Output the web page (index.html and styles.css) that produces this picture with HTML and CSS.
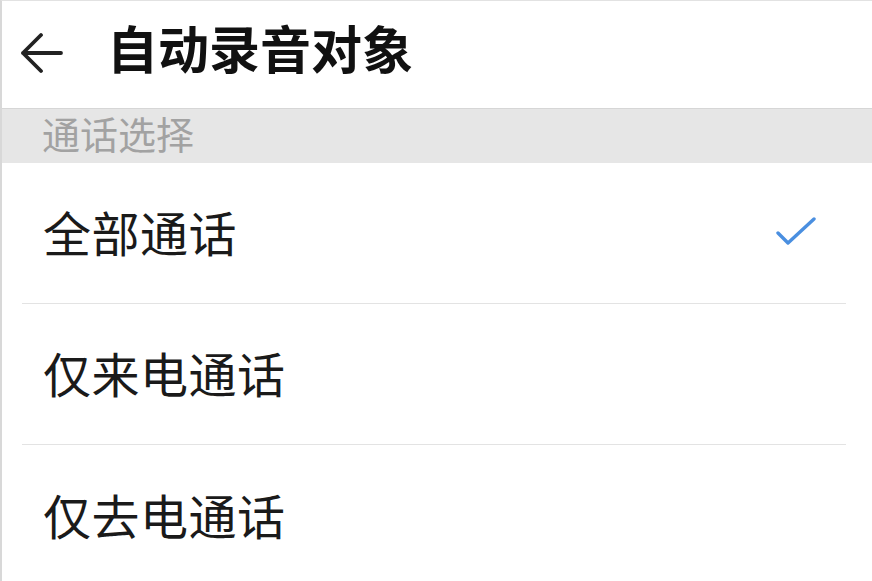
FILE: index.html
```html
<!DOCTYPE html>
<html lang="zh-CN">
<head>
<meta charset="utf-8">
<title>自动录音对象</title>
<link rel="stylesheet" href="styles.css">
</head>
<body>
<div class="screen">
  <header class="header">
    <svg class="back" width="42" height="42" viewBox="0 0 42 42">
      <path d="M2 21 H40 M20 3 L2 21 L20 39" fill="none" stroke="#222" stroke-width="3.8" stroke-linecap="round" stroke-linejoin="round"/>
    </svg>
    <h1 class="title">自动录音对象</h1>
  </header>
  <div class="section"><span class="section-text">通话选择</span></div>
  <ul class="list">
    <li class="item"><span class="label">全部通话</span>
      <svg class="check" width="44" height="34" viewBox="0 0 44 34">
        <path d="M4 16 L14 26 L40 2" fill="none" stroke="#4a8fe0" stroke-width="3.4" stroke-linecap="round" stroke-linejoin="round"/>
      </svg>
    </li>
    <li class="item"><span class="label">仅来电通话</span></li>
    <li class="item last"><span class="label">仅去电通话</span></li>
  </ul>
</div>
</body>
</html>
```
FILE: styles.css
```css
html, body {
  margin: 0;
  padding: 0;
  background: #fff;
}
body {
  width: 872px;
  height: 581px;
  overflow: hidden;
  font-family: "Noto Sans CJK SC", "Noto Sans", sans-serif;
}
.screen {
  height: 580px;
  border-top: 1px solid #e2e2e2;
  border-left: 2px solid #d8d8d8;
}
.header {
  height: 107px;
  display: flex;
  align-items: center;
  padding-left: 19px;
  box-sizing: border-box;
}
.back {
  display: block;
  margin-top: -4px;
}
.title {
  margin: -14px 0 0 44px;
  font-size: 51px;
  font-weight: 600;
  color: #111;
  line-height: 1;
}
.section {
  height: 55px;
  box-sizing: border-box;
  border-top: 1px solid #d6d6d6;
  background: #e6e6e6;
  display: flex;
  align-items: center;
  padding-left: 40px;
}
.section-text {
  color: #a2a2a2;
  font-size: 38px;
  line-height: 1;
  margin-top: -6px;
}
.list {
  list-style: none;
  margin: 0;
  padding: 0;
}
.item {
  height: 141px;
  box-sizing: border-box;
  margin-left: 20px;
  width: 824px;
  border-bottom: 1px solid #e3e3e3;
  display: flex;
  align-items: center;
  justify-content: space-between;
  padding-left: 21px;
  padding-right: 28px;
}
.item.last {
  border-bottom: none;
}
.label {
  font-size: 48px;
  letter-spacing: 0.5px;
  color: #1a1a1a;
  line-height: 1;
  margin-top: -4px;
}
.check {
  display: block;
  margin-top: 2px;
}
```
